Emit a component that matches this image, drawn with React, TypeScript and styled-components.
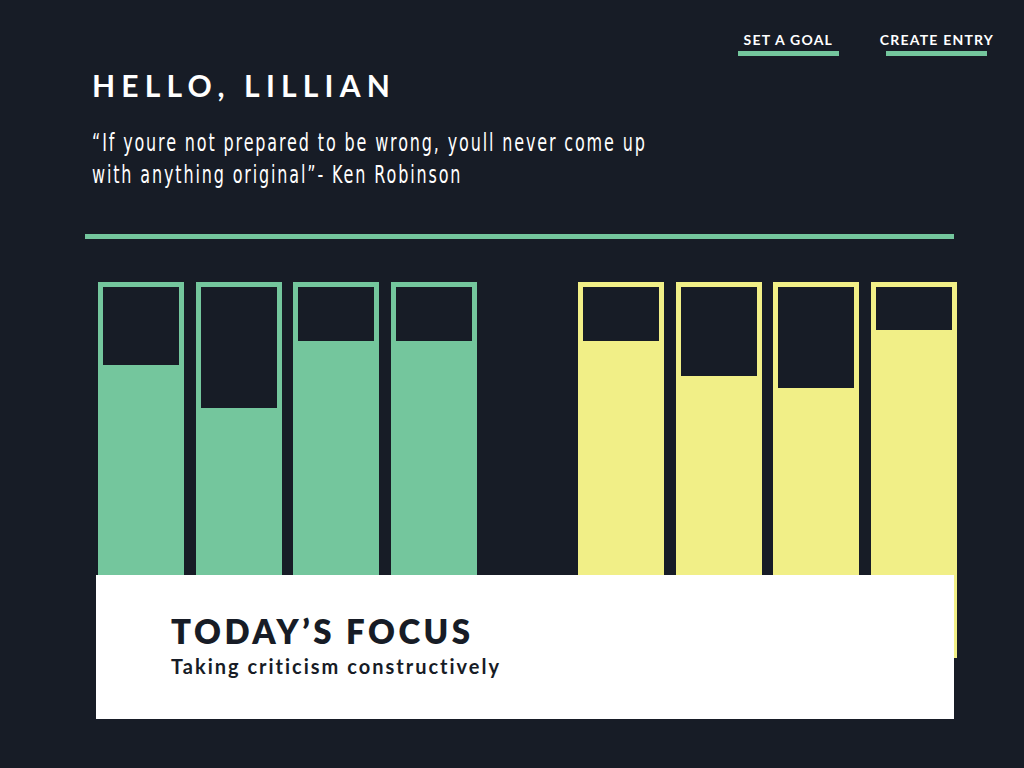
import React from "react";
import styled, { createGlobalStyle } from "styled-components";

const GlobalStyle = createGlobalStyle`
  html, body { margin: 0; padding: 0; background: #171c26; }
  * { box-sizing: border-box; }
`;

const Page = styled.div`
  width: 1024px;
  height: 768px;
  background: #171c26;
  font-family: Lato, "Open Sans", sans-serif;
  color: #ffffff;
  overflow: hidden;
`;

const Nav = styled.nav`
  display: flex;
  justify-content: flex-end;
  gap: 41px;
  padding: 32px 30px 0 0;
`;

const NavItem = styled.a`
  display: flex;
  flex-direction: column;
  align-items: center;
  gap: 3px;
  font-size: 14px;
  font-weight: 700;
  letter-spacing: 1.2px;
  line-height: 16px;
  color: #ffffff;
  text-decoration: none;
`;

const Underline = styled.span`
  display: block;
  width: 101px;
  height: 5px;
  background: #74c69d;
`;

const Header = styled.header`
  padding: 0 0 0 92px;
  margin-top: 11px;
`;

const Title = styled.h1`
  margin: 0;
  font-size: 30px;
  line-height: 36px;
  font-weight: 700;
  letter-spacing: 6.2px;
`;

const Quote = styled.p`
  margin: 24px 0 0 0;
  font-family: "DejaVu Sans", sans-serif;
  font-size: 25px;
  line-height: 32px;
  letter-spacing: 2.9px;
  color: #ffffff;
  width: 900px;
  transform: scaleX(0.64);
  transform-origin: left top;
`;

const Divider = styled.hr`
  margin: 43px 0 0 85px;
  width: 869px;
  height: 5px;
  border: 0;
  background: #74c69d;
`;

const Stage = styled.section`
  display: grid;
  grid-template-rows: 293px 83px 61px;
  margin: 43px 0 0 96px;
  width: 861px;
`;

const Bars = styled.div`
  grid-row: 1 / 3;
  grid-column: 1;
  display: flex;
  gap: 101px;
  padding-left: 2px;
`;

const BarGroup = styled.div`
  display: grid;
  grid-template-columns: repeat(4, 86px);
  column-gap: 11.67px;
`;

const Bar = styled.div<{ $color: string }>`
  display: flex;
  flex-direction: column;
  border: 5px solid ${(p) => p.$color};
  background: ${(p) => p.$color};
`;

const Empty = styled.div`
  background: #171c26;
  width: 100%;
`;

const Card = styled.div`
  grid-row: 2 / 4;
  grid-column: 1;
  width: 858px;
  background: #ffffff;
  color: #171c26;
  padding: 37px 0 0 75px;
  z-index: 1;
`;

const CardTitle = styled.h2`
  margin: 0;
  font-size: 33px;
  line-height: 38px;
  font-weight: 800;
  letter-spacing: 3.5px;
`;

const CardText = styled.p`
  margin: 4px 0 0 0;
  font-size: 20px;
  line-height: 24px;
  font-weight: 700;
  letter-spacing: 2px;
`;

const GREEN = "#74c69d";
const YELLOW = "#f1ef87";

const green = [78, 121, 54, 54];
const yellow = [54, 89, 101, 43];

export default function App() {
  return (
    <Page>
      <GlobalStyle />
      <Nav>
        <NavItem href="#">
          SET A GOAL
          <Underline />
        </NavItem>
        <NavItem href="#">
          CREATE ENTRY
          <Underline />
        </NavItem>
      </Nav>
      <Header>
        <Title>HELLO, LILLIAN</Title>
        <Quote>
          “If youre not prepared to be wrong, youll never come up with anything original”- Ken Robinson
        </Quote>
      </Header>
      <Divider />
      <Stage>
        <Bars>
          <BarGroup>
            {green.map((h, i) => (
              <Bar key={i} $color={GREEN}>
                <Empty style={{ height: h }} />
              </Bar>
            ))}
          </BarGroup>
          <BarGroup>
            {yellow.map((h, i) => (
              <Bar key={i} $color={YELLOW}>
                <Empty style={{ height: h }} />
              </Bar>
            ))}
          </BarGroup>
        </Bars>
        <Card>
          <CardTitle>TODAY’S FOCUS</CardTitle>
          <CardText>Taking criticism constructively</CardText>
        </Card>
      </Stage>
    </Page>
  );
}
